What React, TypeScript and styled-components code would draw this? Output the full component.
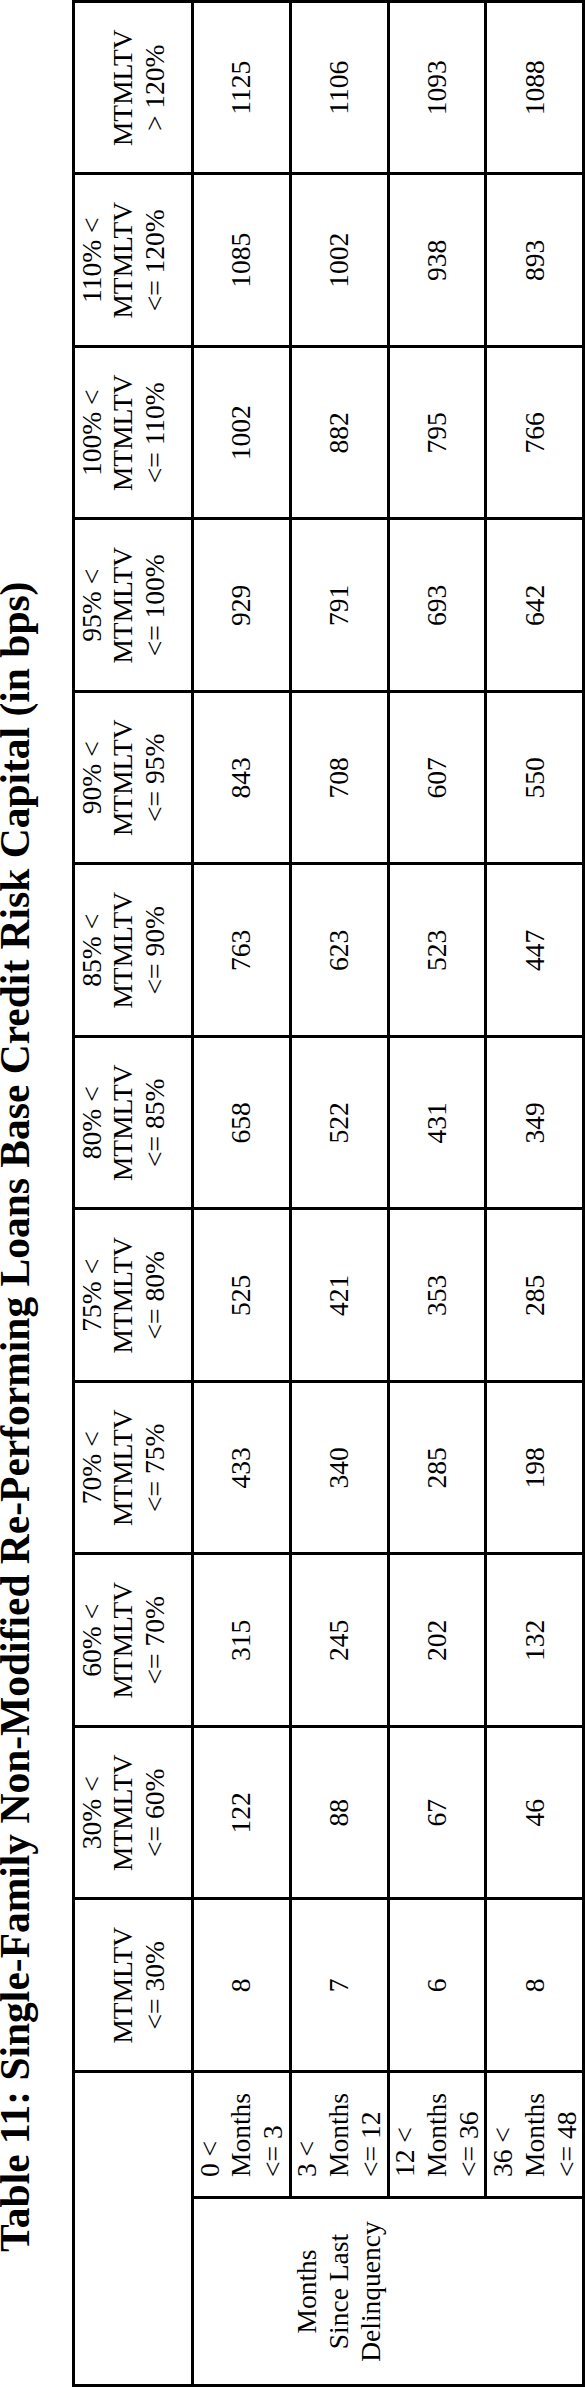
import styled, { createGlobalStyle } from 'styled-components'

const GlobalStyle = createGlobalStyle`
  html, body {
    margin: 0;
    padding: 0;
    background: #fff;
  }
  body {
    width: 586px;
    height: 2387px;
    overflow: hidden;
  }
`

const columns = [
  'MTMLTV <= 30%',
  '30% < MTMLTV <= 60%',
  '60% < MTMLTV <= 70%',
  '70% < MTMLTV <= 75%',
  '75% < MTMLTV <= 80%',
  '80% < MTMLTV <= 85%',
  '85% < MTMLTV <= 90%',
  '90% < MTMLTV <= 95%',
  '95% < MTMLTV <= 100%',
  '100% < MTMLTV <= 110%',
  '110% < MTMLTV <= 120%',
  'MTMLTV > 120%',
]

const rows = [
  {
    label: '0 < Months <= 3',
    values: [8, 122, 315, 433, 525, 658, 763, 843, 929, 1002, 1085, 1125],
  },
  {
    label: '3 < Months <= 12',
    values: [7, 88, 245, 340, 421, 522, 623, 708, 791, 882, 1002, 1106],
  },
  {
    label: '12 < Months <= 36',
    values: [6, 67, 202, 285, 353, 431, 523, 607, 693, 795, 938, 1093],
  },
  {
    label: '36 < Months <= 48',
    values: [8, 46, 132, 198, 285, 349, 447, 550, 642, 766, 893, 1088],
  },
]

const App = () => {
  return (
    <>
      <GlobalStyle />
      <Page>
        <Sheet>
          <Caption>
            Table 11: Single-Family Non-Modified Re-Performing Loans Base
            Credit Risk Capital (in bps)
          </Caption>
          <Grid>
            <Corner />
            {columns.map((col) => (
              <HeadCell key={col}>{col}</HeadCell>
            ))}
            <GroupLabel>Months Since Last Delinquency</GroupLabel>
            {rows.map((row) => (
              <Row key={row.label}>
                <RowLabel>{row.label}</RowLabel>
                {row.values.map((v, i) => (
                  <DataCell key={i}>{v}</DataCell>
                ))}
              </Row>
            ))}
          </Grid>
        </Sheet>
      </Page>
    </>
  )
}
export default App

const Page = styled.div`
  width: 586px;
  height: 2387px;
  overflow: hidden;
  background: #fff;
`

// the whole sheet is laid out landscape and turned a quarter left
const Sheet = styled.div`
  width: 2387px;
  height: 586px;
  display: flex;
  flex-direction: column;
  align-items: flex-start;
  transform-origin: 0 0;
  transform: translateY(2387px) rotate(-90deg);
  font-family: 'Liberation Serif', 'Times New Roman', serif;
  color: #000;
`

const Caption = styled.h1`
  margin: -5px 0 0 135px;
  font-size: 41.5px;
  line-height: 41.5px;
  font-weight: 700;
  white-space: nowrap;
`

const Grid = styled.div`
  margin-top: 35.5px;
  display: grid;
  grid-template-columns: 185px 123px repeat(12, 169.5px);
  grid-template-rows: 116px repeat(4, 94.75px);
  gap: 3px;
  padding: 3px;
  background: #000;
  font-size: 27.5px;
  line-height: 31.8px;
`

const Row = styled.div`
  display: contents;
`

const Cell = styled.div`
  background: #fff;
  display: flex;
`

const Corner = styled(Cell)`
  grid-column: span 2;
`

const HeadCell = styled(Cell)`
  align-items: flex-end;
  justify-content: center;
  text-align: center;
  padding: 0 20px 20px;
`

const GroupLabel = styled(Cell)`
  grid-column: 1;
  grid-row: 2 / span 4;
  justify-content: center;
  align-items: flex-start;
  text-align: center;
  padding: 97px 20px 0;
`

const RowLabel = styled(Cell)`
  grid-column: 2;
  align-items: center;
  padding: 0 10px 0 19px;
  text-align: left;
`

const DataCell = styled(Cell)`
  align-items: center;
  justify-content: center;
`
